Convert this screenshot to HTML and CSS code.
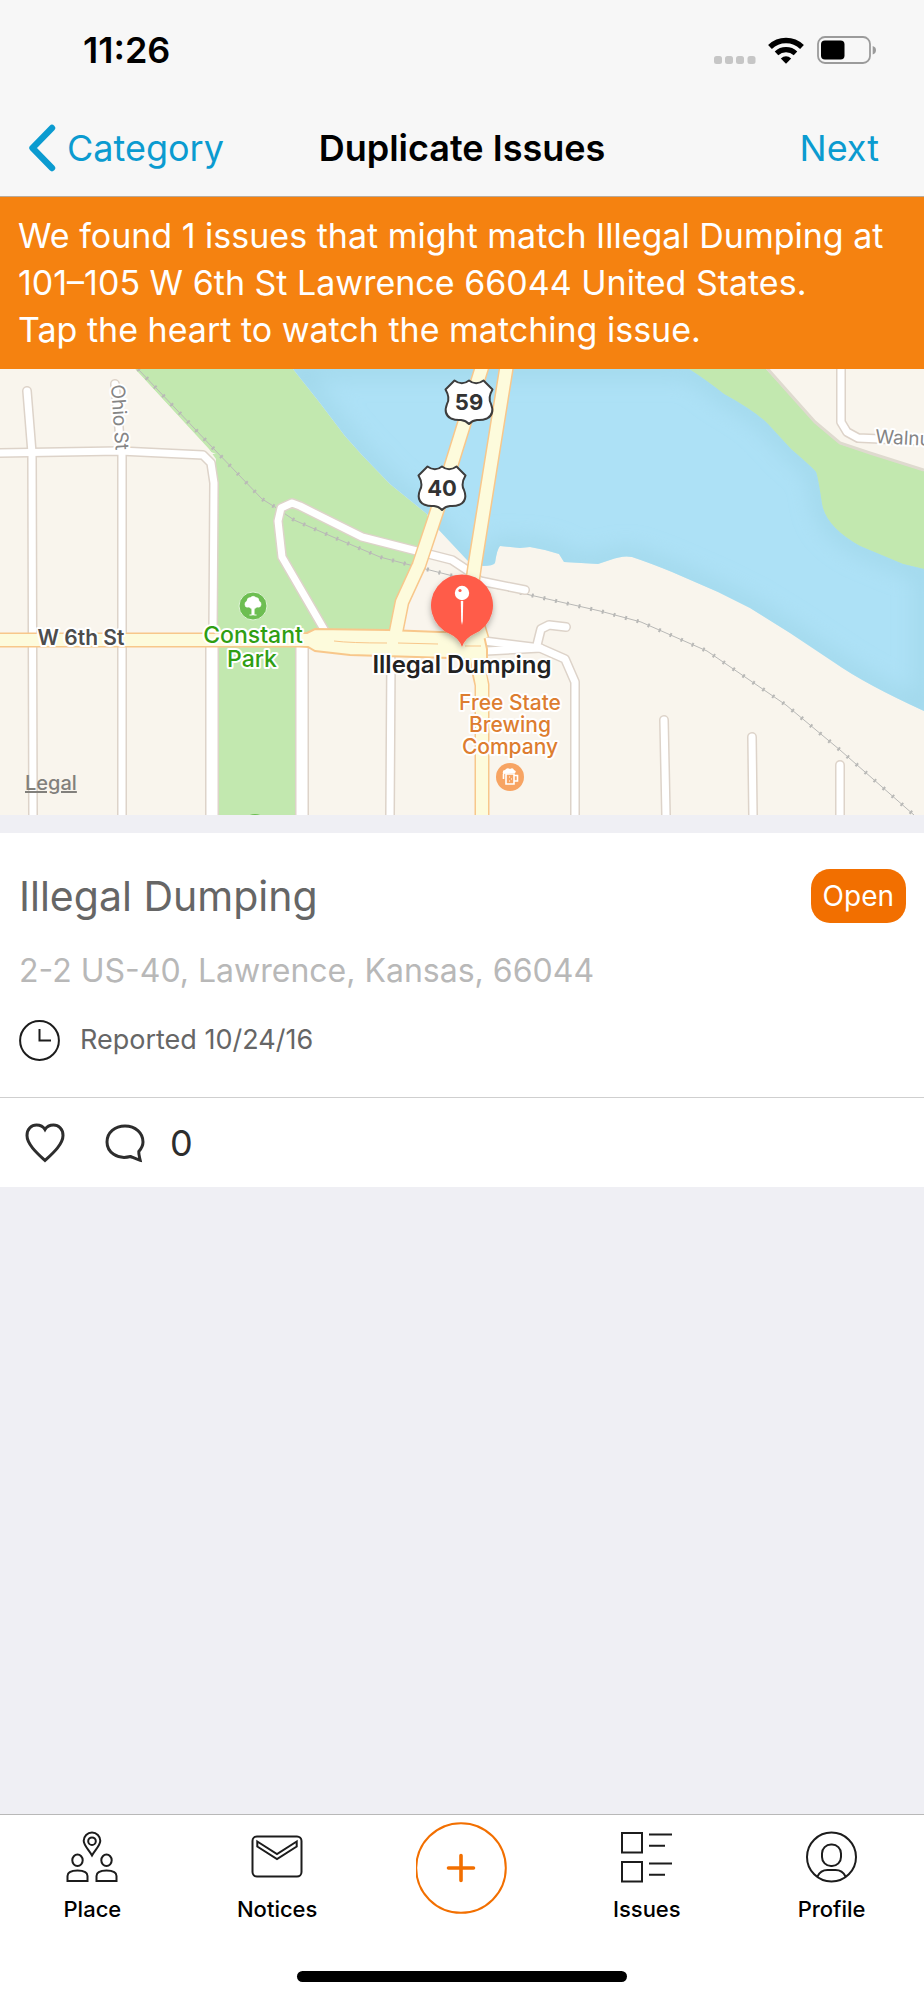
FILE: index.html
```html
<!DOCTYPE html>
<html lang="en">

<head>
<meta charset="UTF-8">
<meta name="viewport" content="width=device-width, initial-scale=1">
<title>Duplicate Issues</title>
<link rel="stylesheet" href="styles.css">
</head>

<body>

<header class="header">
    <div class="status">
        <time class="clock">11:26</time>
        <div class="indicators">
            <svg width="42" height="8" viewBox="0 0 42 8" fill="#c6c6c6">
                <rect width="8" height="8" rx="2.5"/>
                <rect x="11" width="8" height="8" rx="2.5"/>
                <rect x="22" width="8" height="8" rx="2.5"/>
                <rect x="33.5" width="8" height="8" rx="2.5"/>
            </svg>
            <svg class="wifi" width="36" height="27" viewBox="0 0 36 27" fill="none" stroke="#000">
                <path d="M2 10 A23 23 0 0 1 34 10" stroke-width="5.4"/>
                <path d="M8.5 16.3 A14 14 0 0 1 27.5 16.3" stroke-width="5.2"/>
                <path d="M12.8 21.5 Q18 17 23.2 21.5 L18 26.7 Z" fill="#000" stroke="none"/>
            </svg>
            <svg class="battery" width="60" height="28" viewBox="0 0 60 28">
                <rect x="1" y="1" width="52" height="26" rx="7" fill="none" stroke="#9b9b9b" stroke-width="1.8"/>
                <rect x="4" y="4.5" width="23.5" height="19" rx="4" fill="#000"/>
                <path d="M55.7 10 Q59 11 59 14 Q59 17.500 55.700 18.500 Z" fill="#9b9b9b"/>
            </svg>
        </div>
    </div>
    <nav class="navbar">
        <a class="back" href="#category">
            <svg width="28" height="48" viewBox="0 0 28 48" fill="none" stroke="#0b9bd0" stroke-width="6.400" stroke-linecap="round" stroke-linejoin="round">
                <path d="M24 4 L4.500 24 L24 44"/>
            </svg>
            <span>Category</span>
        </a>
        <h1 class="title">Duplicate Issues</h1>
        <a class="next" href="#next">Next</a>
    </nav>
</header>

<main class="content">

    <p class="banner">We found 1 issues that might match Illegal Dumping at 101–105 W 6th St Lawrence 66044 United States.<br>Tap the heart to watch the matching issue.</p>

    <svg class="map" viewBox="0 0 924 446" role="img" aria-label="Map of Illegal Dumping">
        <defs>
            <path id="river" d="M293 0 L320 34 L345 67 L362 86 L390 115 L427 145 L438 160 L468 192 L483 197 Q493 197 495 194 Q497 180 500 177 L520 179 L530 178 L545 181 L559 185 L564 193 L598 195 L610 191 Q623 186 632 188 Q650 194 672 203 L718 223 L750 239 L790 264 L835 294 Q865 315 924 342 L924 200 L903 195 L860 177 Q826 158 822 135 Q818 108 816 103 Q813 99 791 80 L768 55 Q755 42 724 25 Q705 10 689 0 Z"/>
            <clipPath id="riverClip"><use href="#river"/></clipPath>
            <filter id="soft" x="-10%" y="-10%" width="120%" height="120%"><feGaussianBlur stdDeviation="11"/></filter>
            <filter id="pinShadow" x="-30%" y="-30%" width="160%" height="160%">
                <feDropShadow dx="0" dy="3" stdDeviation="3" flood-color="#000" flood-opacity="0.3"/>
            </filter>
            <path id="shield" d="M-23.500 -12.500 L-14.500 -21.500 Q-7 -16 0 -21.500 Q7 -16 14.500 -21.500 L23.500 -12.500 Q18.500 -4 22 2 Q26 12 18 16.500 Q13 18.500 8 18 Q3 18.500 0 22 Q-3 18.500 -8 18 Q-13 18.500 -18 16.500 Q-26 12 -22 2 Q-18.500 -4 -23.500 -12.500 Z"/>
        </defs>

        <rect class="land" width="924" height="446"/>

        <!-- parks -->
        <path class="park" d="M135 0 L293 0 L320 34 L345 67 L362 86 L390 115 L427 145 L432 160 L395 262 L315 262 L296 272 L296 446 L216 446 L216 90 L209 80 Z"/>
        <path class="land" d="M130 0 L135 0 L211 83 L216 85 L204 85 Z"/>
        <path class="park" d="M680 0 L766 0 L812 50 L840 75 L924 102 L924 210 L780 180 Z"/>

        <use class="water" href="#river"/>
        <g clip-path="url(#riverClip)">
            <use class="shore" href="#river" filter="url(#soft)"/>
        </g>
        <path class="trail" d="M766 -2 L790 25 L815 53 L840 74 L870 84 L924 101"/>

        <!-- railway -->
        <path class="rail" d="M138 0 L213 79 L262 130 L275 138 L294 151 L333 168 L380 188 L410 196 L453 207 L530 226 L600 242 L641 253 L707 282 L786 336 L840 381 L914 446"/>
        <path class="rail ties" d="M138 0 L213 79 L262 130 L275 138 L294 151 L333 168 L380 188 L410 196 L453 207 L530 226 L600 242 L641 253 L707 282 L786 336 L840 381 L914 446"/>

        <!-- side streets -->
        <g class="casing">
            <path d="M27 22 L32 84 L33 446"/>
            <path d="M115 15 L120 70 L122 84 V446"/>
            <path d="M-5 84 L120 82 L203 86 L211 94 L214 114 L213 266"/>
            <path d="M325 262 L282 188 L278 152 L281 139 L292 134 L300 137 L362 168 L452 191 L467 201 L480 212 L525 221"/>
            <path d="M484 272 L540 279 L565 290 L575 313 V446"/>
            <path d="M486 282 L540 279 M537 276 L541 260 L549 256 L566 258"/>
            <path d="M391 290 L390 446"/>
            <path d="M664 351 L666 446 M752 368 L753 446 M840 396 V446"/>
            <path d="M841 -5 V53 L847 63 L858 69 L924 72"/>
            <path class="wide" d="M212 272 V455 M302 268 V455"/>
        </g>
        <g class="street">
            <path d="M27 22 L32 84 L33 446"/>
            <path d="M115 15 L120 70 L122 84 V446"/>
            <path d="M-5 84 L120 82 L203 86 L211 94 L214 114 L213 266"/>
            <path d="M325 262 L282 188 L278 152 L281 139 L292 134 L300 137 L362 168 L452 191 L467 201 L480 212 L525 221"/>
            <path d="M484 272 L540 279 L565 290 L575 313 V446"/>
            <path d="M486 282 L540 279 M537 276 L541 260 L549 256 L566 258"/>
            <path d="M391 290 L390 446"/>
            <path d="M664 351 L666 446 M752 368 L753 446 M840 396 V446"/>
            <path d="M841 -5 V53 L847 63 L858 69 L924 72"/>
            <path class="wide" d="M212 272 V455 M302 268 V455"/>
        </g>

        <!-- highways -->
        <g class="highway-casing">
            <path d="M-5 271 H320"/>
            <path d="M483 -5 L465 52 L437 142 L419 196 L402 233 L395 268"/>
            <path d="M507 -5 L475 195 L470 230 L482 270"/>
            <path d="M476 290 L482 316 V455"/>
        </g>
        <path class="junction" d="M300 265 L307 264 L315 260 L388 261 L440 263 L483 262 L487 280 L487 292 L450 289 L350 286 L315 282 L308 278 L300 277 Z"/>
        <g class="highway">
            <path d="M-5 271 H320"/>
            <path d="M483 -5 L465 52 L437 142 L419 196 L402 233 L395 268"/>
            <path d="M507 -5 L475 195 L470 230 L482 270"/>
            <path d="M476 285 L482 316 V455"/>
        </g>
        <path class="median" d="M334 272 Q350 274 387 274 M398 274 L438 275 M465 277 H481"/>

        <!-- road shields -->
        <g class="shield" transform="translate(469 33)">
            <use href="#shield"/>
            <text y="8">59</text>
        </g>
        <g class="shield" transform="translate(442 119)">
            <use href="#shield"/>
            <text y="8">40</text>
        </g>

        <!-- places -->
        <g transform="translate(253 237)">
            <circle r="14" fill="#6dbe52" stroke="#dff3d5" stroke-width="1"/>
            <path d="M-1.200 9 L-1.200 3 L-4 1 Q-8 2 -8 -1 Q-8.500 -4 -6 -5 Q-6 -8.500 -2.500 -8.500 Q0 -11 3 -8.500 Q6 -8.500 6 -5 Q8.500 -4 8 -1 Q7.500 2 4 1 L1.200 3 L1.200 9 L3.500 9 L-3.500 9 Z" fill="#fff" stroke="#fff" stroke-width="0.600"/>
        </g>
        <circle cx="255" cy="458" r="13" fill="#6dbe52"/>
        <text class="label park-name" x="253" y="274">Constant</text>
        <text class="label park-name" x="252" y="298">Park</text>

        <text class="label place-name" x="510" y="341">Free State</text>
        <text class="label place-name" x="510" y="363">Brewing</text>
        <text class="label place-name" x="510" y="385">Company</text>
        <g transform="translate(510 408)">
            <circle r="14" fill="#f7a463"/>
            <path d="M-4 -3 H4 V7 H-4 Z M4 -1.500 H7.500 V4 H4 M-6.500 -3 V2" fill="none" stroke="#fff" stroke-width="1.600"/>
            <path d="M-7 -3 Q-8 -7 -5 -7 Q-3 -10 0 -8 Q3 -10 4 -7 Q7 -6 5 -4 Z" fill="#fff"/>
            <path d="M-1 0 h1 M1 2 h1 M-1 4 h1" fill="none" stroke="#fff"/>
        </g>

        <text class="label road-name" x="81" y="276">W 6th St</text>
        <text class="label street-name" transform="translate(111 16) rotate(86)">Ohio St</text>
        <text class="label street-name" transform="translate(875 74) rotate(3)">Walnut St</text>

        <!-- pin -->
        <path d="M462 278 Q459 269 450 265 A31 31 0 1 1 474 265 Q465 269 462 278 Z" fill="#ff5b48" filter="url(#pinShadow)"/>
        <circle cx="462" cy="224" r="7.200" fill="#fff"/>
        <circle cx="460" cy="221.500" r="1.600" fill="#ff5b48"/>
        <path d="M460.800 232 H463.200 L462.800 252 L462 256 L461.200 252 Z" fill="#fff"/>
        <text class="label pin-name" x="462" y="304">Illegal Dumping</text>

        <a href="#legal"><text class="legal" x="25" y="421">Legal</text></a>
    </svg>

    <article class="card">
        <div class="card-body">
            <div class="card-top">
                <h2 class="issue-title">Illegal Dumping</h2>
                <span class="badge">Open</span>
            </div>
            <p class="address">2-2 US-40, Lawrence, Kansas, 66044</p>
            <p class="reported">
                <svg width="41" height="41" viewBox="0 0 41 41" fill="none" stroke="#1c1c1c" stroke-width="2">
                    <circle cx="20.500" cy="20.500" r="19.400"/>
                    <path d="M20.500 9 V20.500 H32"/>
                </svg>
                <span>Reported 10/24/16</span>
            </p>
        </div>
        <div class="card-actions">
            <button class="action" type="button" aria-label="Watch issue">
                <svg width="40" height="40" viewBox="0 0 40 40" fill="none" stroke="#2d2d2d" stroke-width="3">
                    <path d="M20 37.500 C13 31 2 21.500 2 12.500 C2 6 6.500 2 11.500 2 C15.500 2 18.500 4 20 6.500 C21.500 4 24.500 2 28.500 2 C33.500 2 38 6 38 12.500 C38 21.500 27 31 20 37.500 Z"/>
                </svg>
            </button>
            <button class="action" type="button" aria-label="Comments">
                <svg width="40" height="40" viewBox="0 0 40 40" fill="none" stroke="#2d2d2d" stroke-width="3">
                    <path d="M25.500 33.500 C12 37 2 29 2 19 C2 9.500 10 3 20 3 C30.500 3 38 10 38 19 C38 23 36 26 33.800 28.500 C33.500 31 34.500 34 35.200 37.300 C32 36.500 29 35 25.500 33.500 Z"/>
                </svg>
                <span class="count">0</span>
            </button>
        </div>
    </article>

</main>

<footer class="footer">
    <nav class="tabs">
        <a class="tab" href="#place">
            <svg width="52" height="52" viewBox="0 0 52 52" fill="none" stroke="#1c1c1c" stroke-width="2">
                <path d="M26 24.500 C23 19 17.700 14.500 17.700 9.800 A8.300 8.300 0 0 1 34.300 9.800 C34.300 14.500 29 19 26 24.500 Z"/>
                <circle cx="26" cy="10.200" r="3.800"/>
                <ellipse cx="11.500" cy="29.300" rx="5.200" ry="5.700"/>
                <ellipse cx="40.500" cy="29.300" rx="5.200" ry="5.700"/>
                <path d="M1.500 50 V45 Q1.500 39.500 11.500 39.500 Q21.500 39.500 21.500 45 V50 Z"/>
                <path d="M30.500 50 V45 Q30.500 39.500 40.500 39.500 Q50.500 39.500 50.500 45 V50 Z"/>
            </svg>
            <span>Place</span>
        </a>
        <a class="tab" href="#notices">
            <svg width="52" height="52" viewBox="0 0 52 52" fill="none" stroke="#1c1c1c" stroke-width="2">
                <rect x="1.500" y="5.500" width="49" height="40" rx="4.500"/>
                <path d="M6.300 10.500 L26 23 L45.700 10.500 V15.500 L26 28 L6.300 15.500 Z"/>
            </svg>
            <span>Notices</span>
        </a>
        <a class="tab add" href="#new" aria-label="New issue">
            <svg width="92" height="92" viewBox="0 0 92 92" fill="none" stroke="#f26f00">
                <circle cx="45" cy="46" r="44.800" stroke-width="2"/>
                <path d="M45 33.500 V58.500 M32.500 46 H57.500" stroke-width="3.600" stroke-linecap="round"/>
            </svg>
        </a>
        <a class="tab" href="#issues">
            <svg width="52" height="52" viewBox="0 0 52 52" fill="none" stroke="#1c1c1c" stroke-width="2">
                <rect x="1" y="2" width="20" height="19.500"/>
                <rect x="1" y="31" width="20" height="19.500"/>
                <path d="M28 3.500 H51 M28 14.700 H44 M28 32.500 H51 M28 43.700 H44"/>
            </svg>
            <span>Issues</span>
        </a>
        <a class="tab" href="#profile">
            <svg width="52" height="52" viewBox="0 0 52 52" fill="none" stroke="#1c1c1c" stroke-width="2">
                <circle cx="25.500" cy="26" r="24.500"/>
                <rect x="16" y="13.500" width="19" height="21.500" rx="9"/>
                <path d="M11.500 45.500 Q14.500 39 21.500 39 H29.500 Q36.500 39 39.500 45.500"/>
            </svg>
            <span>Profile</span>
        </a>
    </nav>
    <div class="home-bar"></div>
</footer>

</body>
</html>
```
FILE: styles.css
```css
* {
    box-sizing: border-box;
}

body {
    margin: 0;
    min-height: 100vh;
    display: flex;
    flex-direction: column;
    background-color: #efeff4;
    font-family: Inter, "Liberation Sans", sans-serif;
    color: #000;
}

h1, h2, p {
    margin: 0;
}

a {
    color: inherit;
    text-decoration: none;
}

svg {
    display: block;
    flex: none;
}

/* header */
.header {
    background-color: #f7f7f7;
    border-bottom: 1px solid #b9ab9c;
}

.status {
    display: flex;
    justify-content: space-between;
    align-items: center;
    height: 102px;
    padding: 0 47px 2px 83px;
}

.clock {
    font-size: 36px;
    font-weight: 600;
}

.indicators {
    display: flex;
    align-items: flex-end;
}

.wifi {
    margin-left: 12px;
}

.battery {
    margin-left: 13px;
}

.navbar {
    display: grid;
    grid-template-columns: 1fr auto 1fr;
    align-items: center;
    height: 94px;
    padding: 0 28px 2px;
    font-size: 36px;
}

.back {
    display: flex;
    align-items: center;
    gap: 11px;
    color: #0b9bd0;
}

.title {
    font-size: 36px;
    font-weight: 600;
}

.next {
    justify-self: end;
    padding-right: 17px;
    color: #0b9bd0;
}

/* content */
.content {
    flex: 1;
}

.banner {
    padding: 15px 18px 16px;
    background-color: #f58210;
    color: #fff;
    font-size: 34px;
    line-height: 47px;
}

.map {
    width: 100%;
    height: auto;
    overflow: hidden;
}

.land {
    fill: #f9f5ed;
}

.park {
    fill: #c2e8af;
}

.water {
    fill: #ade1f6;
}

.shore {
    fill: none;
    stroke: #9fd6e8;
    stroke-width: 14px;
}

.trail {
    fill: none;
    stroke: #dfdacf;
    stroke-width: 3px;
}

.rail {
    fill: none;
    stroke: #b9b9b7;
    stroke-width: 1px;
}

.ties {
    stroke-width: 4px;
    stroke-dasharray: 2 10;
}

.casing, .street, .highway-casing, .highway {
    fill: none;
    stroke-linejoin: round;
}

.casing {
    stroke: #ddd3c9;
    stroke-width: 10px;
    stroke-linecap: round;
}

.street {
    stroke: #fff;
    stroke-width: 7px;
    stroke-linecap: round;
}

.casing .wide {
    stroke-width: 14px;
    stroke-linecap: butt;
}

.street .wide {
    stroke-width: 11px;
    stroke-linecap: butt;
}

.highway-casing {
    stroke: #f8c78b;
    stroke-width: 15px;
}

.highway {
    stroke: #fdfbdc;
    stroke-width: 12px;
}

.junction {
    fill: #fdfbdc;
    stroke: #f8c78b;
    stroke-width: 2px;
}

.median {
    fill: none;
    stroke: #f8c78b;
    stroke-width: 1px;
}

.shield use {
    fill: #fff;
    stroke: #3d3d3d;
    stroke-width: 2px;
    stroke-linejoin: round;
}

.shield text {
    fill: #333;
    font-size: 22px;
    font-weight: 700;
    text-anchor: middle;
}

.label {
    paint-order: stroke;
    stroke: #fff;
    stroke-width: 4px;
    stroke-linejoin: round;
    font-size: 21px;
    font-weight: 500;
}

.park-name {
    fill: #2f9e12;
    font-size: 23px;
    text-anchor: middle;
}

.place-name {
    fill: #dd7d30;
    text-anchor: middle;
}

.road-name {
    fill: #4c4c4c;
    font-weight: 600;
    text-anchor: middle;
}

.street-name {
    fill: #858585;
    font-size: 19px;
    font-weight: 400;
}

.pin-name {
    fill: #222;
    font-size: 24px;
    font-weight: 600;
    text-anchor: middle;
}

.legal {
    fill: #82807c;
    font-size: 20px;
    font-weight: 500;
    text-decoration: underline;
}

/* issue card */
.card {
    margin-top: 18px;
    background-color: #fff;
}

.card-body {
    padding: 36px 18px 36px 19px;
}

.card-top {
    display: flex;
    justify-content: space-between;
    align-items: center;
}

.issue-title {
    color: #666;
    font-size: 41px;
    font-weight: 400;
    line-height: 54px;
}

.badge {
    padding: 0 12px;
    border-radius: 19px;
    background-color: #f26f00;
    color: #fff;
    font-size: 28px;
    line-height: 54px;
}

.address {
    margin-top: 28px;
    color: #b8b8b8;
    font-size: 32px;
    line-height: 40px;
}

.reported {
    display: flex;
    align-items: center;
    gap: 20px;
    margin-top: 28px;
    color: #666;
    font-size: 27px;
    line-height: 42px;
}

.card-actions {
    display: flex;
    align-items: center;
    gap: 40px;
    height: 90px;
    padding: 0 25px;
    border-top: 1px solid #cfcfcf;
}

.action {
    display: flex;
    align-items: center;
    gap: 25px;
    padding: 0;
    border: 0;
    background: none;
    color: #2d2d2d;
    font-family: inherit;
    font-size: 36px;
}

/* tab bar */
.footer {
    border-top: 1px solid #b8b8b8;
    background-color: #fff;
}

.tabs {
    display: grid;
    grid-template-columns: repeat(5, 1fr);
    height: 156px;
}

.tab {
    display: flex;
    flex-direction: column;
    align-items: center;
    gap: 12px;
    padding-top: 16px;
    font-size: 22px;
    font-weight: 500;
    line-height: 28px;
}

.add {
    padding-top: 7px;
}

.home-bar {
    width: 330px;
    height: 11px;
    margin: 0 auto 18px;
    border-radius: 6px;
    background-color: #000;
}
```
